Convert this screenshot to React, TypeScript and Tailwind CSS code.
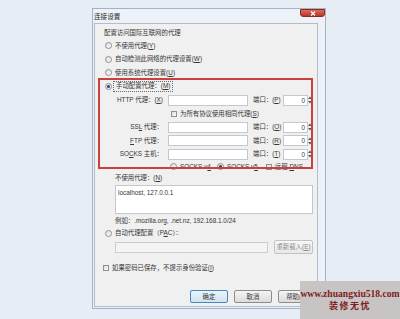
import React from 'react';

const font = "font-['Liberation_Sans','Noto_Sans_CJK_SC',sans-serif]";

function Radio({ checked = false }: { checked?: boolean }) {
  return (
    <span className="flex items-center justify-center w-[7px] h-[7px] rounded-full border border-[#8d9196] bg-gradient-to-br from-[#dcdcdc] to-[#fbfbfb] shrink-0">
      {checked && <span className="w-[3px] h-[3px] rounded-full bg-[#1e3f6e]" />}
    </span>
  );
}

function Check() {
  return (
    <span className="block w-[6px] h-[6px] border border-[#8d9196] bg-gradient-to-br from-[#dedede] to-[#fafafa] shrink-0" />
  );
}

function Spinner() {
  return (
    <svg width="4" height="10" viewBox="0 0 4 10" className="shrink-0">
      <path d="M0 4 L2 1.5 L4 4 Z" fill="#5a5a5a" />
      <path d="M0 6 L2 8.5 L4 6 Z" fill="#5a5a5a" />
    </svg>
  );
}

function ProxyRow({ label, port, h }: { label: React.ReactNode; port: string; h: string }) {
  return (
    <div className={`flex items-center ${h}`}>
      <div className="w-[68px] text-right whitespace-nowrap">{label}</div>
      <div className="ml-[5px] w-[80px] h-[11px] bg-white border border-[#c4c7ce]" />
      <div className="ml-[5px] w-[30px] whitespace-nowrap">
        端口：(<span className="underline">{port}</span>)
      </div>
      <div className="w-[25px] h-[11px] bg-white border border-[#c4c7ce] text-right pr-[2px] leading-[9px]">0</div>
      <Spinner />
    </div>
  );
}

function Button({ children, primary = false }: { children: React.ReactNode; primary?: boolean }) {
  return (
    <div
      className={`flex items-center justify-center w-[38px] h-[13px] rounded-[2px] border ${
        primary
          ? 'border-[#4a86b8] bg-gradient-to-b from-[#eaf4fb] to-[#cfe4f3]'
          : 'border-[#8c8c8c] bg-gradient-to-b from-[#f4f4f4] to-[#dcdcdc]'
      }`}
    >
      {children}
    </div>
  );
}

export default function App() {
  return (
    <div className={`relative w-[400px] h-[319px] overflow-hidden bg-[#e7edf4] text-[6.4px] text-[#363636] ${font}`}>
      {/* dialog window */}
      <div className="ml-[92px] mt-[8px] w-[234px] h-[301px] border border-[#a3b3c5] bg-[#edf2f8] flex flex-col">
        <div className="flex items-start justify-between h-[14px]">
          <span className="ml-[1px] mt-[3px] text-[6.6px] text-[#1e1e1e]">连接设置</span>
          <span className="flex items-center justify-center w-[25px] h-[8px] rounded-b-[3px] bg-gradient-to-b from-[#dc6a5c] to-[#b7372a] border border-[#8e2b21]">
            <svg width="6" height="5" viewBox="0 0 6 5">
              <path d="M1 0.5 L5 4.5 M5 0.5 L1 4.5" stroke="#fff" strokeWidth="1.2" />
            </svg>
          </span>
        </div>

        <div className="flex-1 ml-[1px] mr-[7px] mb-[1px] border border-[#b3bdca] bg-[#f0f0f0] flex flex-col">
          <div className="mt-[3px] h-[12px] flex items-center pl-[9px]">配置访问国际互联网的代理</div>

          <div className="h-[13px] flex items-center gap-[3px] pl-[10px]">
            <Radio />
            <span>不使用代理(<span className="underline">Y</span>)</span>
          </div>
          <div className="h-[14px] flex items-center gap-[3px] pl-[10px]">
            <Radio />
            <span>自动检测此网络的代理设置(<span className="underline">W</span>)</span>
          </div>
          <div className="h-[13px] flex items-center gap-[3px] pl-[10px]">
            <Radio />
            <span>使用系统代理设置(<span className="underline">U</span>)</span>
          </div>
          <div className="h-[14px] flex items-center gap-[1px] pl-[10px]">
            <Radio checked />
            <span className="h-[11px] flex items-center px-[2px] border border-dotted border-[#6a6a6a]">
              手动配置代理：(<span className="underline">M</span>)
            </span>
          </div>

          <ProxyRow h="h-[14px]" label={<>HTTP 代理：(<span className="underline">X</span>)</>} port="P" />

          <div className="h-[13px] flex items-center gap-[3px] pl-[76px]">
            <Check />
            <span>为所有协议使用相同代理(<span className="underline">S</span>)</span>
          </div>

          <ProxyRow h="h-[14px]" label={<>SS<span className="underline">L</span> 代理：</>} port="O" />
          <ProxyRow h="h-[13px]" label={<><span className="underline">F</span>TP 代理：</>} port="R" />
          <ProxyRow h="h-[14px]" label={<>SO<span className="underline">C</span>KS 主机：</>} port="T" />

          <div className="h-[11px] flex items-center pl-[75px]">
            <Radio />
            <span className="ml-[3px]">SOCKS v<span className="underline">4</span></span>
            <span className="ml-[6px]"><Radio checked /></span>
            <span className="ml-[3px]">SOCKS v<span className="underline">5</span></span>
            <span className="ml-[8px]"><Check /></span>
            <span className="ml-[3px]">远程 <span className="underline">D</span>NS</span>
          </div>

          <div className="h-[12px] flex items-center pl-[20px]">
            不使用代理：(<span className="underline">N</span>)
          </div>
          <div className="mt-[1px] ml-[20px] w-[198px] h-[29px] bg-white border border-[#c4c7ce] pl-[2px] pt-[2px] leading-[9px]">
            localhost, 127.0.0.1
          </div>
          <div className="h-[14px] flex items-center pl-[20px]">
            例如：.mozilla.org, .net.nz, 192.168.1.0/24
          </div>

          <div className="h-[10px] flex items-center gap-[3px] pl-[10px]">
            <Radio />
            <span>自动代理配置（P<span className="underline">A</span>C）：</span>
          </div>
          <div className="mt-[2px] h-[14px] flex items-center pl-[20px]">
            <div className="w-[153px] h-[11px] bg-[#f4f4f4] border border-[#cbcdd2]" />
            <div className="ml-[6px] w-[39px] h-[14px] flex items-center justify-center rounded-[2px] border border-[#c2c2c2] bg-gradient-to-b from-[#f7f7f7] to-[#e8e8e8] text-[#8a8a8a]">
              重新载入(<span className="underline">E</span>)
            </div>
          </div>

          <div className="mt-[8px] h-[12px] flex items-center gap-[3px] pl-[8px]">
            <Check />
            <span>如果密码已保存，不提示身份验证(<span className="underline">I</span>)</span>
          </div>

          <div className="mt-[16px] flex items-center gap-[6px] pl-[95px]">
            <Button primary>确定</Button>
            <Button>取消</Button>
            <Button>
              帮助(<span className="underline">H</span>)
            </Button>
          </div>
        </div>
      </div>

      {/* red annotation frame */}
      <div className="absolute left-[98px] top-[78px] w-[215px] h-[91px] border-2 border-[#c9403f]" />

      {/* watermark */}
      <div className="absolute left-[300px] top-[281px] w-[100px] h-[38px] bg-[#c8c4c3] flex flex-col items-center justify-center text-[#7e1e22] font-bold">
        <div className="font-['Liberation_Serif',serif] text-[9.6px] leading-[12px]">www.zhuangxiu518.com</div>
        <div className="font-['Liberation_Serif','Noto_Sans_CJK_SC',serif] text-[9px] leading-[13px] tracking-[1.5px]">装修无忧</div>
      </div>
    </div>
  );
}
